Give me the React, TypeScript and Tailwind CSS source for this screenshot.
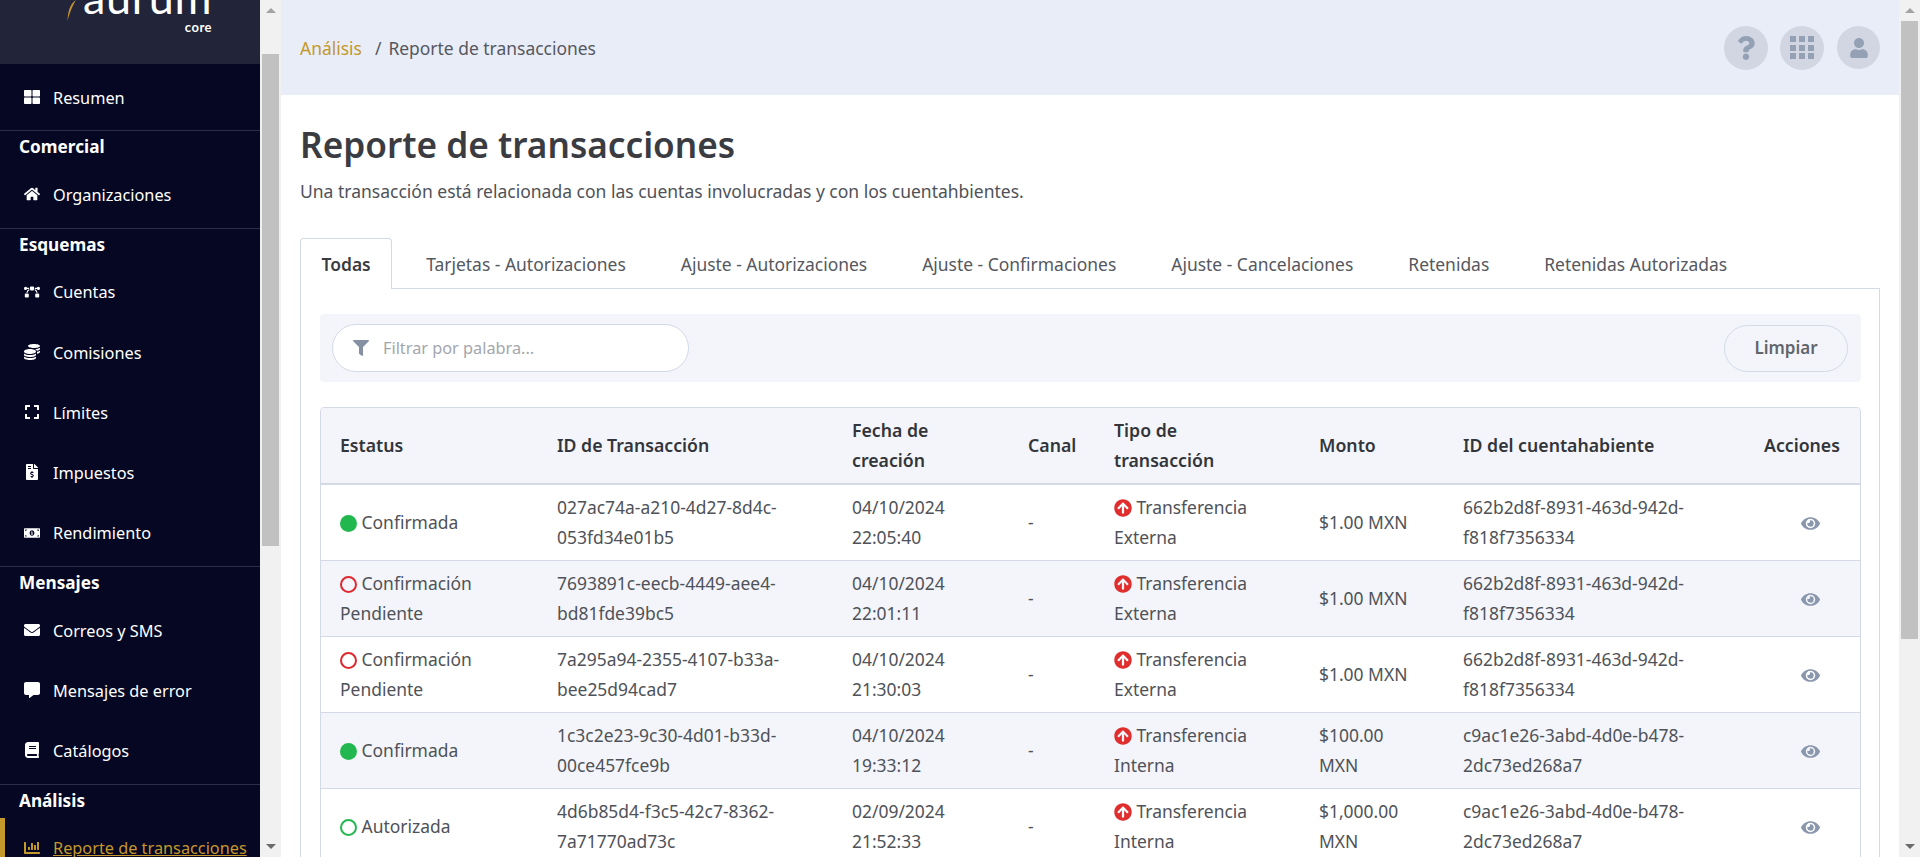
import React from "react";
import {
  FaThLarge, FaHome, FaBezierCurve, FaCoins, FaExpand, FaFileInvoiceDollar, FaMoneyBillAlt,
  FaEnvelope, FaCommentAlt, FaBook, FaChartBar, FaQuestion, FaUser, FaFilter, FaEye, FaArrowCircleUp,
} from "react-icons/fa";

const tabs = ["Tarjetas - Autorizaciones", "Ajuste - Autorizaciones", "Ajuste - Confirmaciones", "Ajuste - Cancelaciones", "Retenidas", "Retenidas Autorizadas"];

const rows = [
  { st: "fill", status: "Confirmada", id: "027ac74a-a210-4d27-8d4c-053fd34e01b5", date: "04/10/2024 22:05:40", tipo: "Externa", monto: "$1.00 MXN", holder: "662b2d8f-8931-463d-942d-f818f7356334" },
  { st: "red", status: "Confirmación Pendiente", id: "7693891c-eecb-4449-aee4-bd81fde39bc5", date: "04/10/2024 22:01:11", tipo: "Externa", monto: "$1.00 MXN", holder: "662b2d8f-8931-463d-942d-f818f7356334" },
  { st: "red", status: "Confirmación Pendiente", id: "7a295a94-2355-4107-b33a-bee25d94cad7", date: "04/10/2024 21:30:03", tipo: "Externa", monto: "$1.00 MXN", holder: "662b2d8f-8931-463d-942d-f818f7356334" },
  { st: "fill", status: "Confirmada", id: "1c3c2e23-9c30-4d01-b33d-00ce457fce9b", date: "04/10/2024 19:33:12", tipo: "Interna", monto: "$100.00 MXN", holder: "c9ac1e26-3abd-4d0e-b478-2dc73ed268a7" },
  { st: "green", status: "Autorizada", id: "4d6b85d4-f3c5-42c7-8362-7a71770ad73c", date: "02/09/2024 21:52:33", tipo: "Interna", monto: "$1,000.00 MXN", holder: "c9ac1e26-3abd-4d0e-b478-2dc73ed268a7" },
];

function NavItem({ icon, label, active }: { icon: React.ReactNode; label: string; active?: boolean }) {
  return (
    <div className={`flex items-center h-[60.25px] pl-[24px] text-[16.3px] ${active ? "text-[#c4982a] border-l-[5px] border-[#c4982a] !pl-[19px]" : "text-white"}`}>
      <span className="w-[16px] flex justify-center text-[16px]">{icon}</span>
      <span className={`ml-[13px] pt-[2px] whitespace-nowrap ${active ? "underline" : ""}`}>{label}</span>
    </div>
  );
}

function Section({ title, children }: { title: string; children: React.ReactNode }) {
  return (
    <div className="border-t border-[#2c2e48] pt-[4px] pb-[3px]">
      <div className="pl-[19px] text-[17.2px] font-bold leading-[24px] text-white mb-[5px]">{title}</div>
      {children}
    </div>
  );
}

function Scrollbar({ top, height }: { top: number; height: number }) {
  return (
    <div className="w-[21px] shrink-0 h-full bg-[#f1f1f1] flex flex-col items-center">
      <div className="h-[21px] flex items-center justify-center shrink-0">
        <div className="w-0 h-0 border-x-[5px] border-x-transparent border-b-[5px] border-b-[#a3a3a3]" />
      </div>
      <div className="flex-1 w-full flex flex-col">
        <div style={{ height: top }} />
        <div style={{ height }} className="w-[17px] mx-auto bg-[#c1c1c1]" />
      </div>
      <div className="h-[21px] flex items-center justify-center shrink-0">
        <div className="w-0 h-0 border-x-[5px] border-x-transparent border-t-[5px] border-t-[#6b6b6b]" />
      </div>
    </div>
  );
}

function StatusDot({ st }: { st: string }) {
  if (st === "fill") return <span className="inline-block align-[-3px] w-[17px] h-[17px] rounded-full bg-[#22b84f]" />;
  if (st === "red") return <span className="inline-block align-[-3px] w-[17px] h-[17px] rounded-full border-2 border-[#e0282e]" />;
  return <span className="inline-block align-[-3px] w-[17px] h-[17px] rounded-full border-2 border-[#22b84f]" />;
}

function GridIcon() {
  return (
    <svg width="24" height="23" viewBox="0 0 24 23" fill="#94a0b4">
      {[0, 9, 18].map((x) => [0, 9, 17].map((y) => <rect key={`${x}-${y}`} x={x} y={y} width="6" height="6" />))}
    </svg>
  );
}

export default function App() {
  return (
    <div className="flex h-[857px] w-[1920px] overflow-hidden bg-white font-['Noto_Sans',sans-serif] text-[17.45px] text-[#4f5258]">
      {/* sidebar */}
      <div className="w-[260px] shrink-0 h-full bg-[#050723] overflow-hidden">
        <div className="h-[64px] bg-[#22253a] overflow-hidden flex pl-[67px]">
          <div className="-mt-[24px] flex items-start h-[60px]">
            <svg width="9" height="21" viewBox="0 0 9 21" className="mt-[24px] mr-[10px] shrink-0">
              <path d="M9 0 C5 3 1 7 0.5 21 C2 15 3 13 4 10 C5.5 7 7 3 9 0Z" fill="#c4902f" />
            </svg>
            <div className="flex flex-col items-end w-[126px]">
              <span className="font-['Lato',sans-serif] font-normal text-[45px] leading-[42px] text-white tracking-[0.6px] whitespace-nowrap">aurum</span>
              <span className="font-['Lato',sans-serif] text-[13px] leading-[12px] font-bold text-white tracking-[0.5px] mt-[3px]">core</span>
            </div>
          </div>
        </div>
        <div className="pt-[3px] pb-[3px]">
          <NavItem icon={<FaThLarge />} label="Resumen" />
        </div>
        <Section title="Comercial">
          <NavItem icon={<FaHome />} label="Organizaciones" />
        </Section>
        <Section title="Esquemas">
          <NavItem icon={<FaBezierCurve />} label="Cuentas" />
          <NavItem icon={<FaCoins />} label="Comisiones" />
          <NavItem icon={<FaExpand />} label="Límites" />
          <NavItem icon={<FaFileInvoiceDollar />} label="Impuestos" />
          <NavItem icon={<FaMoneyBillAlt />} label="Rendimiento" />
        </Section>
        <Section title="Mensajes">
          <NavItem icon={<FaEnvelope />} label="Correos y SMS" />
          <NavItem icon={<FaCommentAlt />} label="Mensajes de error" />
          <NavItem icon={<FaBook />} label="Catálogos" />
        </Section>
        <Section title="Análisis">
          <NavItem icon={<FaChartBar />} label="Reporte de transacciones" active />
        </Section>
      </div>
      <Scrollbar top={33} height={492} />

      {/* main */}
      <div className="flex-1 min-w-0 h-full overflow-hidden">
        <div className="h-[95px] bg-[#e9edf8] flex items-center justify-between pl-[19px] pr-[19px]">
          <div className="flex items-center pt-[2px]">
            <span className="text-[#c4982a]">Análisis</span>
            <span className="ml-[13px] text-[#55585f]">/</span>
            <span className="ml-[7px] text-[#55585f]">Reporte de transacciones</span>
          </div>
          <div className="flex items-center gap-[12px]">
            <div className="w-[44px] h-[44px] rounded-full bg-[#d1d6e2] flex items-center justify-center text-[#94a0b4] text-[24px]"><FaQuestion /></div>
            <div className="w-[44px] h-[44px] rounded-full bg-[#d1d6e2] flex items-center justify-center"><GridIcon /></div>
            <div className="ml-[1px] w-[43px] h-[43px] rounded-full bg-[#d1d6e2] flex items-center justify-center text-[#94a0b4] text-[20px]"><FaUser /></div>
          </div>
        </div>

        <div className="px-[19px]">
          <h1 className="mt-[26px] text-[35.2px] leading-[46px] font-semibold text-[#3a3c42]">Reporte de transacciones</h1>
          <p className="mt-[12px] leading-[24px] text-[17.5px]">Una transacción está relacionada con las cuentas involucradas y con los cuentahbientes.</p>

          {/* tabs */}
          <div className="mt-[35px] flex h-[51px] border-b border-[#d3dae6]">
            <div className="h-[51px] px-[20.5px] flex items-center border border-b-0 border-[#d3dae6] rounded-t-[4px] bg-white font-semibold text-[#3a3c42]">Todas</div>
            {tabs.map((t, i) => (
              <div key={t} className={`${i === 0 ? "ml-[14px]" : "ml-[15px]"} px-[20px] pt-[2px] flex items-center whitespace-nowrap text-[#55585f]`}>{t}</div>
            ))}
          </div>

          <div className="border-x border-[#d3dae6] pl-[19px] pr-[18px] pt-[25px]">
            <div className="h-[68px] bg-[#f3f5fb] rounded-[4px] flex items-center justify-between pl-[12px] pr-[13px]">
              <div className="w-[357px] h-[48px] rounded-full bg-white border border-[#d3dae6] flex items-center pl-[20px]">
                <FaFilter className="text-[#8590a3] text-[16px]" />
                <span className="ml-[14px] text-[16.3px] text-[#a3a6ad]">Filtrar por palabra...</span>
              </div>
              <div className="w-[124px] h-[47px] rounded-full border border-[#d3dae6] flex items-center justify-center text-[17px] font-semibold text-[#62656c]">Limpiar</div>
            </div>

            <div className="mt-[25px] border border-[#d3dae6] rounded-[4px] overflow-hidden">
              <table className="w-full table-fixed border-collapse leading-[30px]">
                <thead>
                  <tr className="bg-[#f3f5fb] h-[76px] border-b-2 border-[#d3dae6] text-left text-[17.7px] text-[#33353b]">
                    <th className="w-[216px] pl-[19px] pb-[2px] font-semibold">Estatus</th>
                    <th className="w-[295px] pl-[20px] pb-[2px] font-semibold">ID de Transacción</th>
                    <th className="w-[176px] pl-[20px] pr-[40px] pb-[2px] font-semibold">Fecha de creación</th>
                    <th className="w-[86px] pl-[20px] pb-[2px] font-semibold">Canal</th>
                    <th className="w-[205px] pl-[20px] pr-[40px] pb-[2px] font-semibold">Tipo de transacción</th>
                    <th className="w-[144px] pl-[20px] pb-[2px] font-semibold">Monto</th>
                    <th className="w-[300px] pl-[20px] pb-[2px] font-semibold">ID del cuentahabiente</th>
                    <th className="pl-[21px] pb-[2px] font-semibold">Acciones</th>
                  </tr>
                </thead>
                <tbody>
                  {rows.map((r, i) => (
                    <tr key={r.id} className={`h-[76px] border-b border-[#d3dae6] ${i % 2 === 1 ? "bg-[#f3f5fb]" : "bg-white"}`}>
                      <td className="pl-[19px] pr-[16px]"><StatusDot st={r.st} /> {r.status}</td>
                      <td className="pl-[20px] pr-[16px] break-words">{r.id}</td>
                      <td className="pl-[20px] pr-[40px]">{r.date}</td>
                      <td className="pl-[20px]">-</td>
                      <td className="pl-[20px] pr-[16px]">
                        <FaArrowCircleUp className="inline-block align-[-3px] text-[#e02d2d] text-[18px]" /> Transferencia {r.tipo}
                      </td>
                      <td className="pl-[20px] pr-[16px]">{r.monto}</td>
                      <td className="pl-[20px] pr-[16px] break-words">{r.holder}</td>
                      <td className="text-center pl-[18px] pb-[2px]"><FaEye className="inline-block text-[#8a97ad] text-[19px]" /></td>
                    </tr>
                  ))}
                </tbody>
              </table>
            </div>
          </div>
        </div>
      </div>
      <Scrollbar top={0} height={618} />
    </div>
  );
}
